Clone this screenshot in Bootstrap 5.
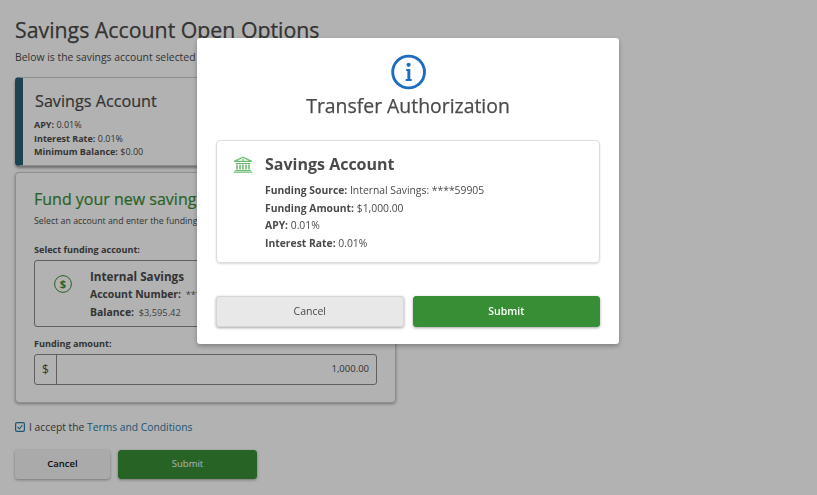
<!DOCTYPE html>
<html lang="en">
<head>
<meta charset="utf-8">
<title>Savings Account Open Options</title>
<link href="https://cdn.jsdelivr.net/npm/bootstrap@5.3.0/dist/css/bootstrap.min.css" rel="stylesheet">
<style>
html, body { height: 100%; overflow: hidden; }
body { font-family: "Open Sans", sans-serif; color: #4a4a4a; background: #fff; font-size: 11px; }
.page-wrap { padding: 18px 0 0 15px; width: 396px; }
.page-title { font-size: 21.3px; font-weight: 400; -webkit-text-stroke: .25px #4a4a4a; line-height: 24px; margin: 0; white-space: nowrap; color: #4a4a4a; }
.page-sub { font-size: 10.4px; line-height: 16px; margin: 7px 0 12px; white-space: nowrap; }
.plan-panel { height: 89px; border: 1px solid #ccc; border-left: 8px solid #276073; border-radius: 4px; box-shadow: 0 2px 3px rgba(0,0,0,.4); padding: 13px 11px; background: #fff; margin-bottom: 6px; }
.plan-title { font-size: 16.2px; -webkit-text-stroke: .2px #4a4a4a; line-height: 20px; margin: 0 0 7px 1px; font-weight: 400; }
.plan-line { font-size: 9px; line-height: 13.5px; white-space: nowrap; }
.plan-line b, .detail-line b, .acct-line b, .field-label { font-weight: 700; }
.fund-panel { height: 231px; border: 1px solid #ccc; border-radius: 4px; box-shadow: 0 1px 3px rgba(0,0,0,.35); padding: 15px 18px; background: #fff; }
.fund-title { font-size: 16px; -webkit-text-stroke: .2px #388e35; line-height: 22px; color: #388e35; font-weight: 400; margin: 0 0 4px; white-space: nowrap; }
.fund-sub { font-size: 8.8px; line-height: 14px; margin: 0 0 15px; white-space: nowrap; }
.field-label { font-size: 9.1px; line-height: 14px; margin: 0 0 3px; display: block; }
.acct-box { height: 67px; border: 1px solid #888; border-radius: 3px; padding: 6px 0 0 19px; margin-bottom: 10px; }
.acct-icon { width: 18px; margin-top: 8px; margin-right: 18px; }
.acct-name { font-size: 11.7px; font-weight: 700; line-height: 18px; margin-bottom: 1px; }
.acct-line { font-size: 10.4px; line-height: 17.5px; white-space: nowrap; }
.acct-line span { font-size: 9.3px; margin-left: 2px; color: #5c5c5c; }
.amount-group { height: 31px; border: 1px solid #888; border-radius: 3px; font-size: 9.5px; }
.amount-prefix { width: 22px; border-right: 1px solid #888; text-align: center; font-size: 12px; }
.amount-value { padding-right: 7px; text-align: right; }
.terms-row { margin: 16px 0 0; font-size: 10.3px; line-height: 16px; }
.terms-row a { color: #2a7ba6; text-decoration: none; }
.tick-box { width: 10px; height: 10px; }
.page-actions { margin-top: 15px; }
.btn-soft, .btn-go { font-family: "Open Sans", sans-serif; font-size: 9.5px; border-radius: 3px; padding: 0; box-shadow: 0 1px 3px rgba(0,0,0,.35); }
.btn-soft { background: #e8e8e8; border: 1px solid #d5d5d5; color: #333; font-weight: 600; }
.btn-go { background: #388e35; border: 1px solid #388e35; color: #fff; }
.page-actions .btn-soft { width: 95px; height: 29px; background: #f4f4f4; border-color: #f4f4f4; color: #111; }
.page-actions .btn-go { width: 139px; height: 29px; }
.modal-backdrop.show { opacity: .3; }
.dialog-box { position: fixed; left: 197px; top: 38px; width: 422px; height: 306px; background: #fff; border-radius: 3px; box-shadow: 0 2px 5px rgba(0,0,0,.3); padding: 16px 19px 0; z-index: 1060; }
.dialog-title { font-size: 19.4px; -webkit-text-stroke: .25px #4a4a4a; line-height: 26px; font-weight: 400; margin: 3px 0 21px; }
.detail-panel { height: 123px; border: 1px solid #ddd; border-radius: 4px; box-shadow: 0 1px 2px rgba(0,0,0,.15); padding: 12px 16px; margin-bottom: 33px; }
.detail-icon { width: 20px; margin: 3px 12px 0 0; }
.detail-name { font-size: 16px; font-weight: 700; line-height: 22px; margin: 0 0 7px; }
.detail-line { font-size: 10.35px; line-height: 17.5px; white-space: nowrap; }
.dialog-actions { gap: 9px; }
.dialog-actions .btn { flex: 1 1 0; height: 31px; font-size: 10.5px; }
.dialog-actions .btn-soft { font-weight: 400; color: #4a4a4a; }
.dialog-actions .btn-go { font-weight: 600; }
</style>
</head>
<body>
<main class="page-wrap">
  <h1 class="page-title">Savings Account Open Options</h1>
  <p class="page-sub">Below is the savings account selected</p>
  <section class="plan-panel">
    <h2 class="plan-title">Savings Account</h2>
    <div class="plan-line"><b>APY:</b> 0.01%</div>
    <div class="plan-line"><b>Interest Rate:</b> 0.01%</div>
    <div class="plan-line"><b>Minimum Balance:</b> $0.00</div>
  </section>
  <section class="fund-panel">
    <h2 class="fund-title">Fund your new savings account</h2>
    <p class="fund-sub">Select an account and enter the funding amount below.</p>
    <span class="field-label">Select funding account:</span>
    <div class="acct-box d-flex">
      <svg class="acct-icon" height="18" viewBox="0 0 18 18" fill="none" stroke="#388e35" aria-hidden="true">
        <circle cx="9" cy="9" r="8.4" stroke-width="1"/>
        <text x="9" y="12.9" text-anchor="middle" font-family="Open Sans, sans-serif" font-size="11" font-weight="700" fill="#388e35" stroke="none">$</text>
      </svg>
      <div>
        <div class="acct-name">Internal Savings</div>
        <div class="acct-line"><b>Account Number:</b> <span>****59905</span></div>
        <div class="acct-line"><b>Balance:</b> <span>$3,595.42</span></div>
      </div>
    </div>
    <span class="field-label">Funding amount:</span>
    <div class="amount-group d-flex align-items-center">
      <div class="amount-prefix h-100 d-flex align-items-center justify-content-center">$</div>
      <div class="amount-value flex-grow-1">1,000.00</div>
    </div>
  </section>
  <div class="terms-row d-flex align-items-center gap-1">
    <svg class="tick-box" viewBox="0 0 10 10" fill="none" stroke="#2a7ba6" aria-hidden="true">
      <rect x=".6" y=".6" width="8.8" height="8.8" rx="1.4" stroke-width="1.2"/>
      <path d="M2.6 5l1.8 1.8 3-3.6" stroke-width="1.1"/>
    </svg>
    <span>I accept the <a href="#">Terms and Conditions</a></span>
  </div>
  <div class="page-actions d-flex gap-2">
    <button class="btn btn-soft" type="button">Cancel</button>
    <button class="btn btn-go" type="button">Submit</button>
  </div>
</main>

<div class="modal-backdrop show"></div>

<div class="dialog-box" role="dialog">
  <div class="text-center">
    <svg width="36" height="36" viewBox="-.6 0 36 36" fill="none" aria-hidden="true" class="d-block mx-auto">
      <circle cx="18" cy="18" r="15.9" stroke="#1f6dbf" stroke-width="2.9"/>
      <circle cx="18" cy="10.8" r="2.1" fill="#1f6dbf"/>
      <path d="M15.6 15h4.1v10h1.4v2h-6v-2h1.7v-8h-1.2z" fill="#1f6dbf"/>
    </svg>
    <h2 class="dialog-title">Transfer Authorization</h2>
  </div>
  <section class="detail-panel d-flex">
    <svg class="detail-icon" height="17" viewBox="0 0 20 17" fill="#6fbd74" aria-hidden="true">
      <path d="M10 .5L19 4.8V6H1V4.8zM10 2L4.2 4.8h11.6z" fill-rule="evenodd"/>
      <circle cx="10" cy="3.9" r=".9"/>
      <path d="M2.5 7h15v1h-15zM3.2 8.5h1.6v5H3.2zM6.2 8.5h1.6v5H6.2zM9.2 8.5h1.6v5H9.2zM12.2 8.5h1.6v5h-1.6zM15.2 8.5h1.6v5h-1.6zM2.2 14h15.6v1H2.2zM.8 15.5h18.4v1.2H.8z"/>
    </svg>
    <div>
      <h3 class="detail-name">Savings Account</h3>
      <div class="detail-line"><b>Funding Source:</b> Internal Savings: ****59905</div>
      <div class="detail-line"><b>Funding Amount:</b> $1,000.00</div>
      <div class="detail-line"><b>APY:</b> 0.01%</div>
      <div class="detail-line"><b>Interest Rate:</b> 0.01%</div>
    </div>
  </section>
  <div class="dialog-actions d-flex">
    <button class="btn btn-soft" type="button">Cancel</button>
    <button class="btn btn-go" type="button">Submit</button>
  </div>
</div>
<script src="https://cdn.jsdelivr.net/npm/bootstrap@5.3.0/dist/js/bootstrap.bundle.min.js"></script>
</body>
</html>
